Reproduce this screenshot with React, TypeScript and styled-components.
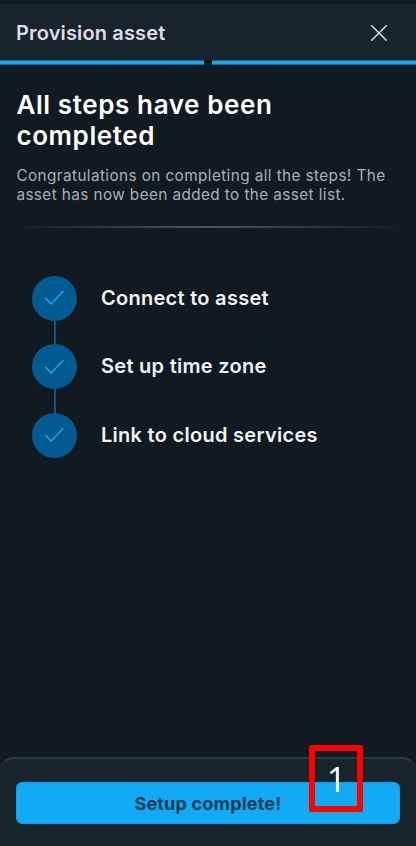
import React from "react";
import styled, { createGlobalStyle } from "styled-components";

const GlobalStyle = createGlobalStyle`
  *, *::before, *::after { box-sizing: border-box; }
  body { margin: 0; background: #111a21; }
`;

const Screen = styled.main`
  display: flex;
  flex-direction: column;
  width: 416px;
  height: 846px;
  padding-top: 4px;
  overflow: hidden;
  background: #111a21;
  color: #f0f2f4;
  font-family: Inter, "Liberation Sans", sans-serif;
`;

const Header = styled.header`
  display: flex;
  align-items: center;
  justify-content: space-between;
  height: 56px;
  padding: 2px 28px 0 16px;
  background: #17242b;
`;

const HeaderTitle = styled.h1`
  margin: 0;
  color: #dfdce7;
  font-size: 20px;
  font-weight: 600;
  line-height: 24px;
  letter-spacing: 0.15px;
`;

const CloseButton = styled.button`
  display: flex;
  padding: 0;
  border: 0;
  background: none;
  color: #d5dbe2;
`;

const Progress = styled.div`
  display: grid;
  grid-template-columns: 204px 204px;
  gap: 8px;
  height: 5px;
`;

const ProgressSegment = styled.span`
  background: #20a3e8;
  border: solid #176d9c;
  border-width: 1px 0;
`;

const Intro = styled.section`
  padding: 25px 16px 0 16.4px;
`;

const Heading = styled.h2`
  margin: 0;
  color: #ffffff;
  font-size: 26px;
  font-weight: 600;
  line-height: 30.5px;
  letter-spacing: 0.6px;
`;

const Description = styled.p`
  margin: 16px 0 0;
  color: #a9b0b8;
  font-size: 15.3px;
  font-weight: 400;
  line-height: 18.7px;
  letter-spacing: 0.41px;
  white-space: nowrap;
`;

const Divider = styled.hr`
  width: 400px;
  height: 2px;
  margin: 21.6px auto 0;
  border: 0;
  background: linear-gradient(90deg, transparent, #4c565d 50%, transparent);
`;

const StepList = styled.ol`
  flex: 1;
  margin: 0;
  padding: 47.7px 0 0 32px;
  list-style: none;
`;

const Step = styled.li`
  display: grid;
  grid-template-columns: 45px 1fr;
  column-gap: 24px;
  align-items: center;
`;

const StepMarker = styled.span`
  display: grid;
  place-items: center;
  width: 45px;
  height: 45px;
  border-radius: 50%;
  background: #035c91;
  color: #22a5ef;
`;

const StepLabel = styled.span`
  padding-bottom: 0.8px;
  font-size: 20px;
  font-weight: 600;
  line-height: 24px;
  letter-spacing: 0.28px;
`;

const Connector = styled.span`
  width: 2px;
  height: 23.6px;
  justify-self: center;
  background: #1d5375;
`;

const Footer = styled.footer`
  position: relative;
  height: 89px;
  padding: 23px 16px 0;
  border-top: 2px solid #2b3940;
  border-radius: 14px 14px 0 0;
  background: #17242b;
`;

const PrimaryButton = styled.button`
  display: flex;
  align-items: center;
  justify-content: center;
  width: 384px;
  height: 42px;
  padding: 0;
  border: 1px solid #169be1;
  border-radius: 6px;
  background: #13aaf5;
  color: #073b56;
  font-family: inherit;
  font-size: 18px;
  font-weight: 700;
  letter-spacing: 0.2px;
`;

const Callout = styled.span`
  position: absolute;
  top: -14px;
  left: 309px;
  display: flex;
  justify-content: center;
  width: 54px;
  height: 67px;
  padding-left: 1px;
  border: 6px solid #ff0000;
  border-radius: 2px;
  color: #ffffff;
  font-family: "Open Sans", sans-serif;
  font-size: 34px;
  font-weight: 500;
  line-height: 56px;
`;

const steps = ["Connect to asset", "Set up time zone", "Link to cloud services"];

const CloseIcon = () => (
  <svg width="18" height="18" viewBox="0 0 18 18" fill="none" stroke="currentColor" strokeWidth="1.5" strokeLinecap="round">
    <path d="M1.7 1.7l14.6 14.6M16.3 1.7L1.7 16.3" />
  </svg>
);

const CheckIcon = () => (
  <svg width="21" height="16" viewBox="0 0 21 16" fill="none" stroke="currentColor" strokeWidth="1.4" strokeLinecap="round">
    <path d="M1.5 8.2l5.7 5.7L19 1.6" />
  </svg>
);

export default function App() {
  return (
    <>
      <GlobalStyle />
      <Screen>
        <Header>
          <HeaderTitle>Provision asset</HeaderTitle>
          <CloseButton aria-label="Close">
            <CloseIcon />
          </CloseButton>
        </Header>
        <Progress>
          <ProgressSegment />
          <ProgressSegment />
        </Progress>
        <Intro>
          <Heading>
            All steps have been
            <br />
            completed
          </Heading>
          <Description>
            Congratulations on completing all the steps! The
            <br />
            asset has now been added to the asset list.
          </Description>
        </Intro>
        <Divider />
        <StepList>
          {steps.map((label, index) => (
            <React.Fragment key={label}>
              {index > 0 && (
                <Step as="div" aria-hidden="true">
                  <Connector />
                </Step>
              )}
              <Step>
                <StepMarker>
                  <CheckIcon />
                </StepMarker>
                <StepLabel>{label}</StepLabel>
              </Step>
            </React.Fragment>
          ))}
        </StepList>
        <Footer>
          <PrimaryButton>Setup complete!</PrimaryButton>
          <Callout>1</Callout>
        </Footer>
      </Screen>
    </>
  );
}
